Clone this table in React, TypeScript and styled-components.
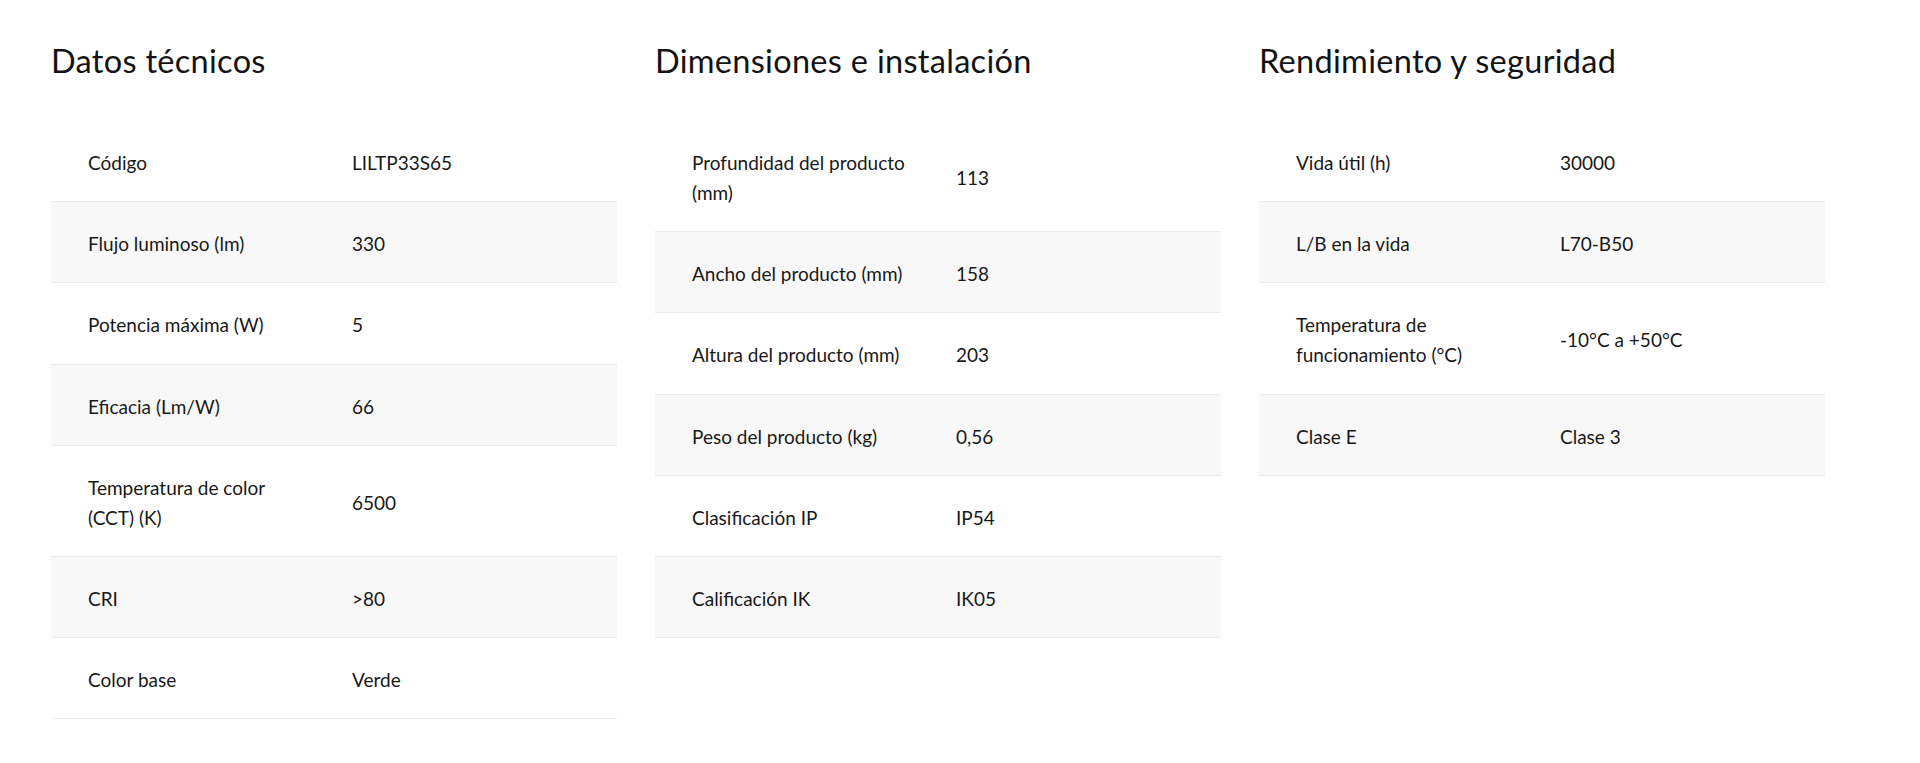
import React from 'react'
import styled, { createGlobalStyle } from 'styled-components'

type Spec = [string, string]

type Group = {
  title: string
  rows: Spec[]
}

const groups: Group[] = [
  {
    title: 'Datos técnicos',
    rows: [
      ['Código', 'LILTP33S65'],
      ['Flujo luminoso (lm)', '330'],
      ['Potencia máxima (W)', '5'],
      ['Eficacia (Lm/W)', '66'],
      ['Temperatura de color (CCT) (K)', '6500'],
      ['CRI', '>80'],
      ['Color base', 'Verde'],
    ],
  },
  {
    title: 'Dimensiones e instalación',
    rows: [
      ['Profundidad del producto (mm)', '113'],
      ['Ancho del producto (mm)', '158'],
      ['Altura del producto (mm)', '203'],
      ['Peso del producto (kg)', '0,56'],
      ['Clasificación IP', 'IP54'],
      ['Calificación IK', 'IK05'],
    ],
  },
  {
    title: 'Rendimiento y seguridad',
    rows: [
      ['Vida útil (h)', '30000'],
      ['L/B en la vida', 'L70-B50'],
      ['Temperatura de funcionamiento (°C)', '-10°C a +50°C'],
      ['Clase E', 'Clase 3'],
    ],
  },
]

const App = () => {
  return (
    <>
      <GlobalStyle />
      <Page>
        {groups.map((group) => (
          <Section key={group.title}>
            <Title>{group.title}</Title>
            <SpecTable>
              <tbody>
                {group.rows.map(([label, value], i) => (
                  <Row key={label} $shaded={i % 2 === 1}>
                    <Label>{label}</Label>
                    <Value>{value}</Value>
                  </Row>
                ))}
              </tbody>
            </SpecTable>
          </Section>
        ))}
      </Page>
    </>
  )
}

export default App

const GlobalStyle = createGlobalStyle`
  html, body {
    margin: 0;
    padding: 0;
    background: #ffffff;
  }

  body {
    font-family: Lato, 'Open Sans', sans-serif;
    color: #181818;
    -webkit-font-smoothing: antialiased;
  }
`

const Page = styled.main`
  display: grid;
  grid-template-columns: repeat(3, 566px);
  column-gap: 38px;
  align-items: start;
  padding: 41px 51px 0;
  min-height: 763px;
  box-sizing: border-box;
`

const Section = styled.section`
  display: flex;
  flex-direction: column;
`

const Title = styled.h2`
  margin: 0 0 41px;
  font-size: 32.5px;
  font-weight: 400;
  line-height: 39px;
  letter-spacing: 0.3px;
  color: #131313;
`

const SpecTable = styled.table`
  width: 100%;
  border-collapse: collapse;
  table-layout: fixed;
`

const Row = styled.tr<{ $shaded: boolean }>`
  background: ${({ $shaded }) => ($shaded ? '#f8f8f8' : '#ffffff')};
  border-bottom: 1px solid #ebebeb;
`

const Label = styled.td`
  width: 301px;
  box-sizing: border-box;
  padding: 27px 46px 23.2px 37px;
  font-size: 19px;
  line-height: 30px;
  vertical-align: top;
`

const Value = styled.td`
  padding: 27px 20px 23.2px 0;
  font-size: 19px;
  line-height: 30px;
  vertical-align: middle;
`
